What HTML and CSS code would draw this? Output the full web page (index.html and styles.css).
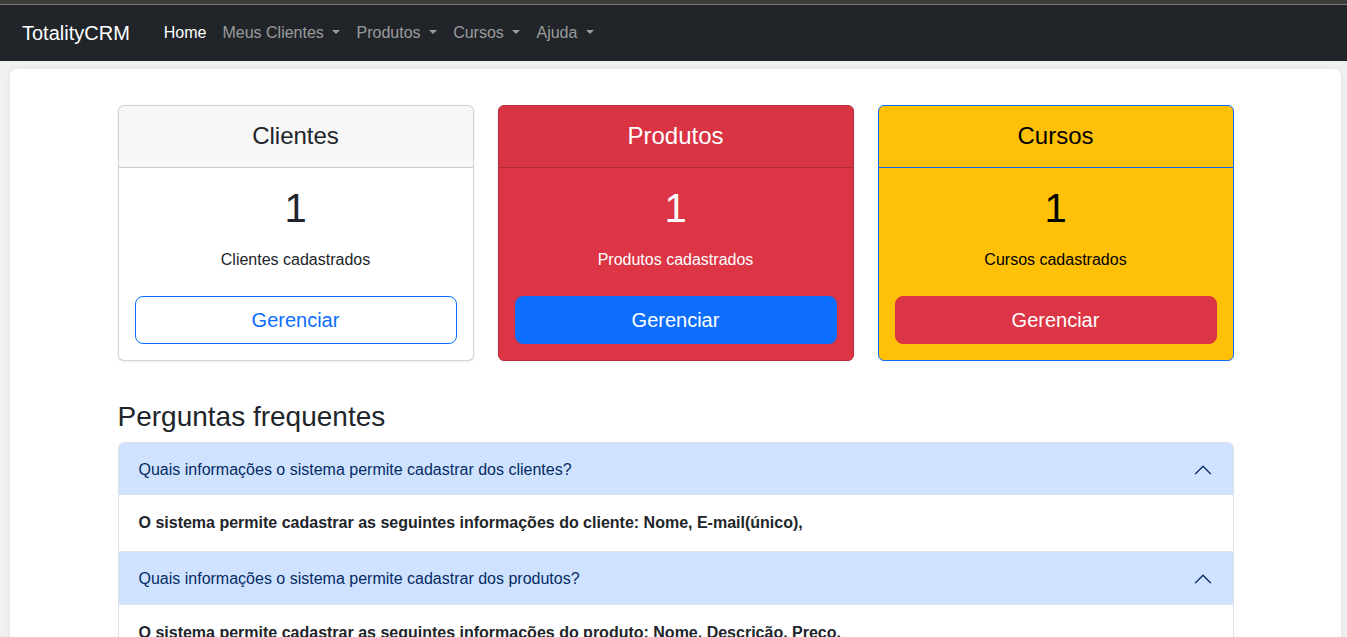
FILE: index.html
```html
<!DOCTYPE html>
<html lang="pt-BR">
<head>
<meta charset="utf-8">
<title>TotalityCRM</title>
<link rel="stylesheet" href="styles.css">
</head>
<body>
<div class="topstrip"></div>
<nav class="navbar">
  <a class="brand" href="#">TotalityCRM</a>
  <ul class="nav">
    <li><a class="nav-link active" href="#">Home</a></li>
    <li><a class="nav-link dropdown" href="#">Meus Clientes</a></li>
    <li><a class="nav-link dropdown" href="#">Produtos</a></li>
    <li><a class="nav-link dropdown" href="#">Cursos</a></li>
    <li><a class="nav-link dropdown" href="#">Ajuda</a></li>
  </ul>
</nav>
<main class="page">
  <div class="container">
    <div class="cards">
      <div class="card card-light">
        <div class="card-header"><h4>Clientes</h4></div>
        <div class="card-body">
          <h1 class="count">1</h1>
          <p class="label">Clientes cadastrados</p>
          <a class="btn btn-outline-primary" href="#">Gerenciar</a>
        </div>
      </div>
      <div class="card card-danger">
        <div class="card-header"><h4>Produtos</h4></div>
        <div class="card-body">
          <h1 class="count">1</h1>
          <p class="label">Produtos cadastrados</p>
          <a class="btn btn-primary" href="#">Gerenciar</a>
        </div>
      </div>
      <div class="card card-warning">
        <div class="card-header"><h4>Cursos</h4></div>
        <div class="card-body">
          <h1 class="count">1</h1>
          <p class="label">Cursos cadastrados</p>
          <a class="btn btn-danger" href="#">Gerenciar</a>
        </div>
      </div>
    </div>

    <h3 class="faq-title">Perguntas frequentes</h3>
    <div class="accordion">
      <div class="acc-item">
        <button class="acc-button">
          <span>Quais informações o sistema permite cadastrar dos clientes?</span>
          <svg class="chev" viewBox="0 0 16 16" width="20" height="20"><path fill="#052c65" fill-rule="evenodd" d="M1.646 11.354a.5.5 0 0 0 .708 0L8 5.707l5.646 5.647a.5.5 0 0 0 .708-.708l-6-6a.5.5 0 0 0-.708 0l-6 6a.5.5 0 0 0 0 .708z"/></svg>
        </button>
        <div class="acc-body"><strong>O sistema permite cadastrar as seguintes informações do cliente: Nome, E-mail(único),</strong></div>
      </div>
      <div class="acc-item">
        <button class="acc-button">
          <span>Quais informações o sistema permite cadastrar dos produtos?</span>
          <svg class="chev" viewBox="0 0 16 16" width="20" height="20"><path fill="#052c65" fill-rule="evenodd" d="M1.646 11.354a.5.5 0 0 0 .708 0L8 5.707l5.646 5.647a.5.5 0 0 0 .708-.708l-6-6a.5.5 0 0 0-.708 0l-6 6a.5.5 0 0 0 0 .708z"/></svg>
        </button>
        <div class="acc-body"><strong>O sistema permite cadastrar as seguintes informações do produto: Nome, Descrição, Preço.</strong></div>
      </div>
    </div>
  </div>
</main>
</body>
</html>
```

FILE: styles.css
```css
* { box-sizing: border-box; }
html, body { margin: 0; padding: 0; }
body {
  font-family: "Liberation Sans", Arial, sans-serif;
  font-size: 16px;
  line-height: 1.5;
  color: #212529;
  background: #f0f0f0;
  overflow: hidden;
}
.topstrip {
  height: 5px;
  background: #3b3b3b;
  border-bottom: 1px solid #7a7a7a;
}
.navbar {
  height: 56px;
  background: #212529;
  display: flex;
  align-items: center;
  padding-left: 22px;
}
.brand {
  color: #fff;
  font-size: 20px;
  text-decoration: none;
  margin-right: 26px;
  line-height: 30px;
}
.nav {
  list-style: none;
  margin: 0;
  padding: 0;
  display: flex;
}
.nav-link {
  display: block;
  padding: 8px 8px;
  color: rgba(255,255,255,0.55);
  text-decoration: none;
  font-size: 16px;
  line-height: 24px;
}
.nav-link.active { color: #fff; }
.dropdown::after {
  content: "";
  display: inline-block;
  margin-left: 0.54em;
  vertical-align: 0.255em;
  border-top: 0.3em solid;
  border-right: 0.3em solid transparent;
  border-left: 0.3em solid transparent;
  border-bottom: 0;
}
.page {
  background: #fff;
  margin: 8px 6px 0 10px;
  border-radius: 7px;
  height: 600px;
  box-shadow: 0 0 6px rgba(0,0,0,0.06);
}
.container {
  max-width: 1116px;
  margin: 0 auto;
  padding-top: 36px;
}
.cards {
  display: grid;
  grid-template-columns: repeat(3, 1fr);
  gap: 24px;
}
.card {
  border: 1px solid rgba(0,0,0,0.175);
  border-radius: 6px;
  overflow: hidden;
  text-align: center;
}
.card-light {
  background: #fff;
  box-shadow: 0 1px 3px rgba(0,0,0,0.08);
}
.card-danger {
  background: #dc3545;
  color: #fff;
  border-color: #b52c39;
}
.card-warning {
  background: #ffc107;
  color: #000;
  border-color: #0d6efd;
}
.card-header {
  height: 62px;
  display: flex;
  align-items: center;
  justify-content: center;
  background: rgba(0,0,0,0.03);
  border-bottom: 1px solid rgba(0,0,0,0.175);
}
.card-danger .card-header { background: rgba(0,0,0,0.012); }
.card-warning .card-header { background: transparent; border-bottom-color: #0d6efd; }
.card-header h4 {
  margin: 0;
  font-size: 24px;
  font-weight: 400;
  line-height: 1.2;
}
.card-body {
  padding: 16px;
}
.count {
  margin: 0 0 16px;
  font-size: 40px;
  font-weight: 400;
  line-height: 48px;
}
.label {
  margin: 0 0 24px;
  font-size: 16px;
  line-height: 24px;
}
.btn {
  display: block;
  height: 48px;
  padding: 8px 16px;
  font-size: 20px;
  line-height: 30px;
  border-radius: 8px;
  border: 1px solid transparent;
  text-decoration: none;
}
.btn-outline-primary { color: #0d6efd; border-color: #0d6efd; background: transparent; }
.btn-primary { color: #fff; background: #0d6efd; border-color: #0d6efd; }
.btn-danger { color: #fff; background: #dc3545; border-color: #dc3545; }
.faq-title {
  margin: 39px 0 8px;
  font-size: 28px;
  font-weight: 400;
  line-height: 1.2;
}
.accordion {
  border-radius: 6px;
}
.acc-item {
  border: 1px solid #dee2e6;
  background: #fff;
}
.acc-item:first-child {
  border-top-left-radius: 6px;
  border-top-right-radius: 6px;
  overflow: hidden;
}
.acc-item + .acc-item { border-top: 0; }
.acc-button {
  width: 100%;
  display: flex;
  align-items: center;
  justify-content: space-between;
  height: 52px;
  padding: 15px 20px 13px;
  border: 0;
  background: #cfe2ff;
  color: #052c65;
  font-family: inherit;
  font-size: 16px;
  line-height: 24px;
  text-align: left;
  box-shadow: inset 0 -1px 0 #dee2e6;
  cursor: pointer;
}
.acc-item + .acc-item .acc-button { height: 53px; padding-top: 15px; padding-bottom: 14px; }
.chev { flex-shrink: 0; display: block; }
.acc-body {
  padding: 16px 20px;
  line-height: 24px;
}
```
